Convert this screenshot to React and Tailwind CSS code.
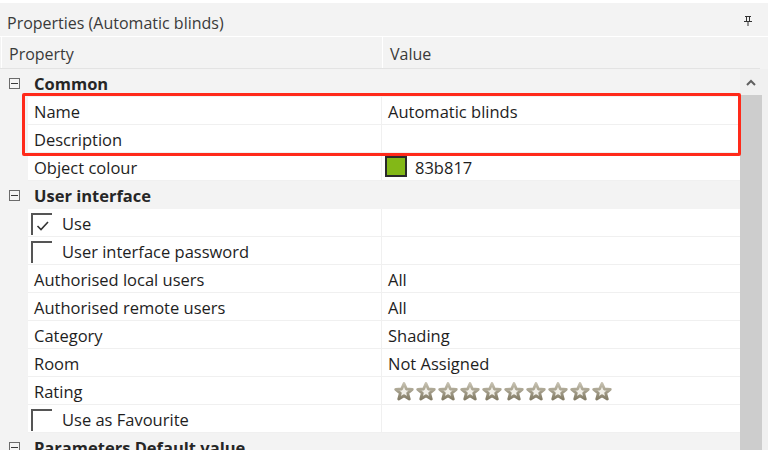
import React from "react";

const font = { fontFamily: '"Open Sans", "Noto Sans", sans-serif' };

function Star() {
  return (
    <svg width="20" height="19" viewBox="0 0 20 19" className="block">
      <defs>
        <linearGradient id="sg" x1="0" y1="0" x2="0" y2="1">
          <stop offset="0" stopColor="#c4bfae" />
          <stop offset="1" stopColor="#857e68" />
        </linearGradient>
      </defs>
      <path
        d="M10 1.5 L12.4 7 L18.3 7.3 L13.7 11.1 L15.3 17 L10 13.7 L4.7 17 L6.3 11.1 L1.7 7.3 L7.6 7 Z"
        fill="#f1efe8"
        stroke="url(#sg)"
        strokeWidth="2.8"
        strokeLinejoin="round"
      />
    </svg>
  );
}

function Collapse() {
  return (
    <div className="w-[11px] h-[11px] border border-[#6b6b6b] flex items-center justify-center bg-[#f5f5f5]">
      <div className="w-[7px] h-px bg-[#3a3a3a]" />
    </div>
  );
}

function Check({ checked }) {
  return (
    <div className="w-[21px] h-[22px] border-t-2 border-l-2 border-[#555] relative shrink-0">
      {checked && (
        <svg width="14" height="12" viewBox="0 0 14 12" className="absolute left-[3px] top-[5px]">
          <path d="M1.5 6 L5 9.5 L12 2" fill="none" stroke="#333" strokeWidth="1.6" />
        </svg>
      )}
    </div>
  );
}

function Category({ label }) {
  return (
    <div className="h-[28px] shrink-0 flex items-center bg-[#f3f3f3]">
      <div className="w-[28px] h-full flex items-center justify-center pl-[1px]">
        <Collapse />
      </div>
      <span className="pl-[6px] pt-[2px] font-bold text-[#262626]">{label}</span>
    </div>
  );
}

function Row({ name, value, check, checked }) {
  return (
    <div className="h-[28px] shrink-0 flex bg-[#f3f3f3]">
      <div className="w-[28px] shrink-0" />
      <div className="flex-1 flex bg-white border-b border-[#f0f0f0]">
        <div className="w-[354px] shrink-0 flex items-center border-r border-[#f0f0f0]">
          {check !== undefined ? (
            <div className="flex items-center pl-[3px] pt-[2px]">
              <Check checked={checked} />
              <span className="pl-[10px] pt-[1px]">{name}</span>
            </div>
          ) : (
            <span className="pl-[6px] pt-[3px]">{name}</span>
          )}
        </div>
        <div className="flex-1 flex items-center pl-[6px] pt-[3px]">{value}</div>
      </div>
    </div>
  );
}

export default function App() {
  return (
    <div className="w-[768px] h-[450px] overflow-hidden bg-[#f3f3f3] text-[16.5px] leading-none text-[#1e1e1e] flex flex-col" style={font}>
      <div className="h-[3px] bg-white shrink-0" />
      <div className="h-[34px] shrink-0 flex items-center justify-between pl-[7px] pr-[15px] border-b border-white text-[#3a3a3a]">
        <span className="text-[16px] pt-[6px]">Properties (Automatic blinds)</span>
        <svg width="10" height="12" viewBox="0 0 10 12" className="mt-[3px]">
          <path d="M2 1 H8 V2 H7 V6 H9 V7 H5.5 V11 H4.5 V7 H1 V6 H3 V2 H2 Z M4 2 V6 H6 V2 Z" fill="#333" />
        </svg>
      </div>
      <div className="h-[32px] shrink-0 flex border-b border-[#e3e3e3] pl-[1px] mr-[8px] text-[16px]">
        <div className="w-[382px] flex items-center pl-[7px] pt-[3px] border-l border-white border-r text-[#3a3a3a]">Property</div>
        <div className="flex-1 flex items-center pl-[7px] pt-[3px] text-[#3a3a3a]">Value</div>
      </div>
      <div className="flex-1 flex min-h-0">
        <div className="w-[740px] flex flex-col relative">
          <Category label="Common" />
          <Row name="Name" value="Automatic blinds" />
          <Row name="Description" value="" />
          <Row
            name="Object colour"
            value={
              <div className="flex items-center -ml-[3px] -mt-[3px]">
                <div className="w-[22px] h-[21px] bg-[#83b817] border-2 border-[#2a2a2a]" />
                <span className="pl-[8px] pt-[3px]">83b817</span>
              </div>
            }
          />
          <Category label="User interface" />
          <Row name="Use" check checked value="" />
          <Row name="User interface password" check checked={false} value="" />
          <Row name="Authorised local users" value="All" />
          <Row name="Authorised remote users" value="All" />
          <Row name="Category" value="Shading" />
          <Row name="Room" value="Not Assigned" />
          <Row
            name="Rating"
            value={
              <div className="flex gap-[2px] pl-[6px] -mt-[1px]">
                {[0, 1, 2, 3, 4, 5, 6, 7, 8, 9].map((i) => (
                  <Star key={i} />
                ))}
              </div>
            }
          />
          <Row name="Use as Favourite" check checked={false} value="" />
          <Category label="Parameters Default value" />
          <div className="absolute left-[22px] top-[24px] w-[719px] h-[63px] border-[3px] border-[#ff2a1a] rounded-[2px]" />
        </div>
        <div className="w-[22px] flex flex-col bg-[#cdcdcd]">
          <div className="h-[26px] bg-[#f0f0f0] flex items-center justify-center">
            <svg width="10" height="7" viewBox="0 0 10 7">
              <path d="M1 6 L5 2 L9 6" fill="none" stroke="#606060" strokeWidth="2" />
            </svg>
          </div>
          <div className="flex-1 bg-[#cdcdcd]" />
        </div>
        <div className="flex-1 bg-[#f0f0f0]" />
      </div>
    </div>
  );
}
